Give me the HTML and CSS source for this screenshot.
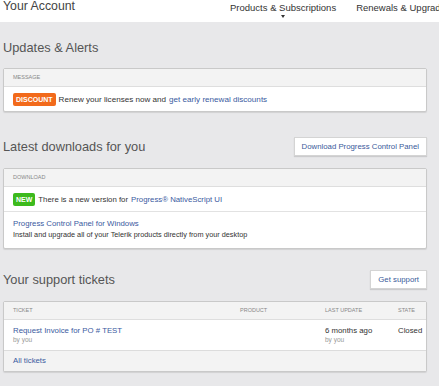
FILE: index.html
```html
<!DOCTYPE html>
<html lang="en">
<head>
  <meta charset="UTF-8" />
  <title>Your Account</title>
  <meta name="viewport" content="width=device-width, initial-scale=1.0">
  <link rel="stylesheet" href="styles.css">
</head>
<body>

  <!-- Top bar -->
  <header class="topbar">
    <div class="brand">Your Account</div>
    <nav class="nav">
      <a class="nav-item active">Products &amp; Subscriptions</a>
      <a class="nav-item">Renewals &amp; Upgrades</a>
    </nav>
  </header>

  <main class="content">

    <!-- Updates -->
    <section class="block">
      <div class="block-head">
        <h2>Updates &amp; Alerts</h2>
      </div>
      <div class="panel">
        <div class="panel-head">Message</div>
        <div class="panel-row large">
          <span class="badge badge-orange">Discount</span>
          Renew your licenses now and <a class="link">get early renewal discounts</a>
        </div>
      </div>
    </section>

    <!-- Downloads -->
    <section class="block">
      <div class="block-head">
        <h2>Latest downloads for you</h2>
        <a class="btn">Download Progress Control Panel</a>
      </div>
      <div class="panel">
        <div class="panel-head">Download</div>
        <div class="panel-row">
          <span class="badge badge-green">New</span>
          There is a new version for <a class="link">Progress® NativeScript UI</a>
        </div>
        <div class="panel-row tall">
          <a class="link">Progress Control Panel for Windows</a>
          <div class="desc">Install and upgrade all of your Telerik products directly from your desktop</div>
        </div>
      </div>
    </section>

    <!-- Tickets -->
    <section class="block">
      <div class="block-head">
        <h2>Your support tickets</h2>
        <a class="btn">Get support</a>
      </div>
      <div class="panel">
        <div class="panel-head tickets">
          <span>Ticket</span>
          <span>Product</span>
          <span>Last update</span>
          <span>State</span>
        </div>
        <div class="panel-row tickets">
          <div>
            <a class="link">Request Invoice for PO # TEST</a>
            <div class="muted">by you</div>
          </div>
          <div></div>
          <div>
            6 months ago
            <div class="muted">by you</div>
          </div>
          <div>Closed</div>
        </div>
        <div class="panel-foot">
          <a class="link">All tickets</a>
        </div>
      </div>
    </section>

  </main>

</body>
</html>
```

FILE: styles.css
```css
html, body {
  margin: 0;
  padding: 0;
  height: 100%;
  overflow: hidden;
  background: #e8e8ea;
  font-family: "Liberation Sans", Arial, sans-serif;
  color: #333;
}

a {
  cursor: pointer;
}

/* top bar */
.topbar {
  height: 22px;
  background: #fff;
  display: flex;
  align-items: flex-start;
  white-space: nowrap;
  overflow: hidden;
}

.brand {
  font-size: 12.3px;
  color: #444;
  padding: 0 0 0 3px;
  line-height: 13px;
}

.nav {
  display: flex;
  gap: 20px;
  margin-left: 155px;
  padding-top: 2px;
}

.nav-item {
  font-size: 9.5px;
  color: #333;
  position: relative;
}

.nav-item.active::after {
  content: "";
  position: absolute;
  left: 50%;
  top: 13px;
  margin-left: -2px;
  border-left: 2.5px solid transparent;
  border-right: 2.5px solid transparent;
  border-top: 3px solid #333;
}

/* content */
.content {
  padding: 16px 12px 0 3px;
}

.block {
  margin-bottom: 25px;
}

.block:nth-child(2) {
  margin-bottom: 21px;
}

.block-head {
  height: 19px;
  display: flex;
  align-items: center;
  justify-content: space-between;
  margin-bottom: 12px;
}

.block:first-child .block-head {
  margin-bottom: 11px;
}

.block-head h2 {
  margin: 0;
  font-size: 12.8px;
  font-weight: normal;
  color: #555;
}

.btn {
  display: inline-block;
  background: #fff;
  border: 1px solid #d4d4d4;
  box-shadow: 0 1px 1px rgba(0,0,0,0.12);
  color: #3a5a9a;
  font-size: 7.8px;
  height: 17px;
  line-height: 17px;
  padding: 0 7px;
}

.panel {
  background: #fff;
  border: 1px solid #c9c9c9;
  border-radius: 2px;
  box-shadow: 0 1px 1px rgba(0,0,0,0.1);
}

.panel-head {
  background: #f3f3f3;
  border-bottom: 1px solid #dedede;
  height: 17px;
  line-height: 17px;
  padding-left: 9px;
  font-size: 5.5px;
  text-transform: uppercase;
  color: #888;
}

.panel-row {
  min-height: 24px;
  display: flex;
  align-items: center;
  padding-left: 9px;
  font-size: 7.8px;
  border-bottom: 1px solid #e2e2e2;
}

.panel-row.large {
  font-size: 8.1px;
}

.panel-row:last-child {
  border-bottom: none;
}

.panel-row.tall {
  display: block;
  min-height: 0;
  padding-top: 6px;
  padding-bottom: 8px;
  line-height: 11px;
}

.desc {
  font-size: 7.3px;
}

.badge {
  display: inline-block;
  color: #fff;
  font-weight: bold;
  font-size: 7px;
  text-transform: uppercase;
  height: 13px;
  line-height: 13px;
  padding: 0 3px;
  border-radius: 2px;
  margin-right: 3px;
}

.badge-orange {
  background: #f26a1b;
}

.badge-green {
  background: #3dba1d;
}

.link {
  color: #3a5aa0;
  margin-left: 3px;
}

.panel-row.tall .link,
.tickets .link,
.panel-foot .link {
  margin-left: 0;
}

/* tickets table */
.tickets {
  display: grid;
  grid-template-columns: 227px 85px 73px auto;
}

.panel-row.tickets {
  align-items: start;
  padding-top: 6px;
  height: 22px;
  line-height: 10px;
  border-bottom: 1px solid #dcdcdc;
}

.muted {
  color: #999;
  font-size: 6.5px;
  line-height: 8px;
}

.panel-foot {
  background: #f3f3f3;
  height: 20px;
  line-height: 20px;
  padding-left: 9px;
  font-size: 7.8px;
}
```
